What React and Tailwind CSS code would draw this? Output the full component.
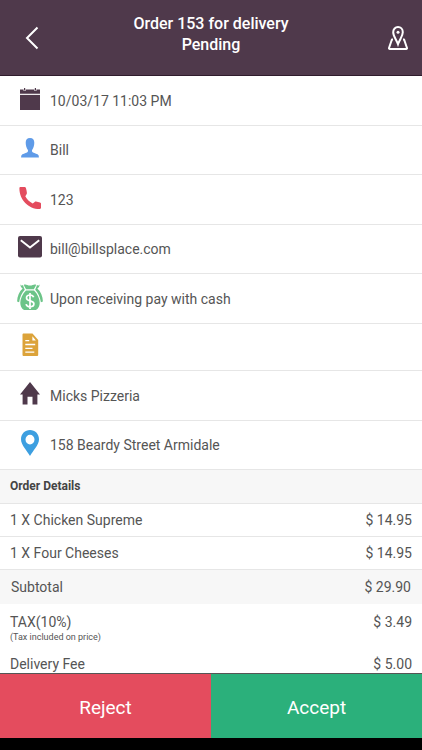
import React from 'react';

const CalendarIcon = () => (
  <svg width="22" height="24" viewBox="0 0 22 24" fill="#4f394b" aria-hidden="true">
    <path d="M1 2.500h3.600v1.600h2V2.500h8.800v1.600h2V2.500H21v4.200H1z" />
    <path d="M5 1h1.200v2.400H5zM15.800 1H17v2.400h-1.200z" />
    <path d="M1 7.900h20V23H1z" />
  </svg>
);

const PersonIcon = () => (
  <svg width="18" height="20" viewBox="0 0 18 20" fill="#5f9be8" aria-hidden="true">
    <path d="M9 0c3 0 4.300 2 4.300 4.700 0 2.800-.9 5.500-2.200 7.200-.3 1 0 2.100.9 2.600 1.500.9 4.800 1.300 5.500 2.700.3.700.4 1.800.4 2.300H.1c0-.5.1-1.600.4-2.300.7-1.400 4-1.800 5.500-2.700.9-.5 1.200-1.600.9-2.600C5.600 10.200 4.700 7.500 4.700 4.700 4.700 2 6 0 9 0z" />
  </svg>
);

const PhoneIcon = () => (
  <svg width="22" height="24" viewBox="0 0 22 24" fill="#e44c5e" aria-hidden="true">
    <path d="M1.500 1h4c.8 0 1.200.4 1.400 1.100.5 1.700.9 3.300 1 5 0 .6-.1 1-.5 1.500L6.300 10.300c1.700 3.300 4.100 5.500 7.400 7.200l2-1.600c.4-.4.9-.4 1.300-.3 1.500.5 2.600.7 4 .8.600.1 1 .5 1 1.200v4.200c0 .7-.5 1.200-1.100 1.200C9.600 23.200.4 14 .4 2.200.4 1.500.9 1 1.500 1z" />
  </svg>
);

const MailIcon = () => (
  <svg width="24" height="22" viewBox="0 0 24 22" aria-hidden="true">
    <rect width="24" height="21.500" rx="2" fill="#4f394b" />
    <path d="M2.800 4.200 12 11.600l9.200-7.400" fill="none" stroke="#fff" strokeWidth="1.900" />
  </svg>
);

const MoneyIcon = () => (
  <svg width="26" height="28" viewBox="0 0 26 28" fill="#6cc488" aria-hidden="true">
    <path d="M7.200 1.600c1.800-.8 3.300 1 5.800 1s4-1.800 5.800-1c.9.700-1.300 3.300-1.800 4.700H9C8.500 4.900 6.300 2.300 7.200 1.600z" />
    <path d="M9 7.400h8c3.600 3.600 5.700 8.200 5.700 12.300 0 4.500-2.700 7.300-4.500 7.300H7.800c-1.800 0-4.500-2.800-4.500-7.300C3.300 15.600 5.400 11 9 7.400z" />
    <path d="M3.500 1.200c.4 1.500 1.700 1.600 2.600.9.200 1.700 1 2.900 1.700 4.700C4.900 10 2.800 14.400 2.100 19.300L.1 18.500C.2 13.400 2.200 8.500 5.700 5.600 4.200 4.600 3.200 3.100 3.500 1.200z" />
    <path d="M22.500 1.200c-.4 1.500-1.700 1.600-2.600.9-.2 1.700-1 2.900-1.700 4.700 2.900 3.200 5 7.600 5.700 12.500l2-.8c-.1-5.100-2.100-10-5.600-12.900 1.500-1 2.500-2.500 2.200-4.400z" />
    <path
      d="M16.600 14.300c-.4-1.500-1.700-2.300-3.500-2.300-2.100 0-3.600 1.100-3.600 2.900 0 4 7.400 1.900 7.400 5.900 0 1.900-1.600 3-3.800 3-2.100 0-3.600-.9-4-2.700M13 9.900v16"
      fill="none"
      stroke="#fff"
      strokeWidth="1.700"
    />
  </svg>
);

const NoteIcon = () => (
  <svg width="17" height="24" viewBox="0 0 17 24" aria-hidden="true">
    <path d="M1.800.5h8.700L16.200 7v14.700c0 .8-.5 1.300-1.300 1.300H1.800C1 23 .5 22.500.5 21.700V1.800C.5 1 1 .5 1.800.5z" fill="#dca33a" />
    <path d="M10.400 3.300v4.200h3.500z" fill="#fff" />
    <path d="M3.300 7.700h3.900M3.300 11.500h9.900M3.300 15.300h7.200M3.300 19.100h9" stroke="#fff" strokeWidth="1.300" />
  </svg>
);

const HomeIcon = () => (
  <svg width="20" height="23" viewBox="0 0 20 23" fill="#4f394b" aria-hidden="true">
    <path d="M10 0l10 12.400h-2.600v10.100h-4.900v-7.700h-5v7.700H2.600V12.400H0z" />
  </svg>
);

const PinIcon = () => (
  <svg width="18" height="26" viewBox="0 0 18 26" fill="#3d9fe0" aria-hidden="true">
    <path
      fillRule="evenodd"
      d="M9 0c5 0 9 3.900 9 9.200C18 15 12 20.500 9 26 6 20.500 0 15 0 9.200 0 3.900 4 0 9 0zm0 4.700a4.500 4.900 0 1 0 0 9.800 4.500 4.900 0 0 0 0-9.800z"
    />
  </svg>
);

const details = [
  { id: 'date', Icon: CalendarIcon, text: '10/03/17 11:03 PM' },
  { id: 'name', Icon: PersonIcon, text: 'Bill' },
  { id: 'phone', Icon: PhoneIcon, text: '123' },
  { id: 'email', Icon: MailIcon, text: 'bill@billsplace.com' },
  { id: 'payment', Icon: MoneyIcon, text: 'Upon receiving pay with cash' },
  { id: 'notes', Icon: NoteIcon, text: '', short: true },
  { id: 'store', Icon: HomeIcon, text: 'Micks Pizzeria' },
  { id: 'address', Icon: PinIcon, text: '158 Beardy Street Armidale' },
];

const items = [
  { id: 1, qty: 1, name: 'Chicken Supreme', price: 14.95 },
  { id: 2, qty: 1, name: 'Four Cheeses', price: 14.95 },
];

const formatPrice = (price) => `$ ${price.toFixed(2)}`;

const Header = () => (
  <header className="flex h-[76px] shrink-0 items-center justify-between border-b border-[#2f1c2c] bg-[#4f394b] px-[14px] text-white">
    <button type="button" aria-label="Back" className="flex h-10 w-9 items-center justify-center">
      <svg width="14" height="24" viewBox="0 0 14 24" fill="none" stroke="#fff" strokeWidth="2">
        <path d="M12.500 1.500 2 12l10.500 10.500" />
      </svg>
    </button>
    <h1 className="pb-2 text-center text-base leading-[21px] font-medium">
      Order 153 for delivery
      <br />
      Pending
    </h1>
    <button type="button" aria-label="Show on map" className="flex h-10 w-9 items-center justify-end">
      <svg width="20" height="24" viewBox="0 0 20 24" fill="none" stroke="#fff" strokeWidth="2">
        <path d="M10 18.200C8.300 13.500 5.200 10 5.200 6.200 5.200 3.200 7.300 1 10 1s4.800 2.200 4.800 5.200c0 3.800-3.100 7.300-4.800 12z" />
        <circle cx="10" cy="6.200" r="1.500" fill="#fff" stroke="none" />
        <path d="M5 13.500H3.900L1 22c-.1.600.2 1 .8 1h16.400c.6 0 .9-.4.800-1l-2.900-8.500H15" strokeLinejoin="round" />
      </svg>
    </button>
  </header>
);

const App = () => {
  const subtotal = items.reduce((sum, item) => sum + item.price, 0);

  return (
    <div className="flex h-screen flex-col bg-white font-[Roboto,sans-serif] text-sm text-[#555]">
      <Header />

      <main className="min-h-0 flex-1 overflow-y-auto [scrollbar-width:none]">
        {/* Customer and delivery info */}
        <ul>
          {details.map(({ id, Icon, text, short }) => (
            <li
              key={id}
              className={`flex items-center border-b border-[#e6e6e6] pb-1 pl-4 ${short ? 'h-[47px]' : 'h-[50px] even:h-[49px]'}`}
            >
              <span className="flex w-7 justify-center">
                <Icon />
              </span>
              <span className="pt-1 pl-[6px]">{text}</span>
            </li>
          ))}
        </ul>

        {/* Order summary */}
        <table className="w-full border-collapse">
          <thead>
            <tr className="h-[33px] border-b border-[#e6e6e6] bg-[#f7f7f7]">
              <th colSpan={2} className="px-[10px] text-left text-xs font-bold text-[#444]">
                Order Details
              </th>
            </tr>
          </thead>
          <tbody>
            {items.map((item) => (
              <tr key={item.id} className="h-[33px] border-b border-[#e6e6e6]">
                <td className="pl-[10px]">{item.qty} X {item.name}</td>
                <td className="pr-[10px] text-right">{formatPrice(item.price)}</td>
              </tr>
            ))}
            <tr className="h-[35px] bg-[#f7f7f7]">
              <td className="pl-[11px]">Subtotal</td>
              <td className="pr-[11px] text-right">{formatPrice(subtotal)}</td>
            </tr>
            <tr className="h-12 align-top">
              <td className="pt-2 pl-[10px]">
                TAX(10%)
                <span className="block text-[9px] leading-[10px]">(Tax included on price)</span>
              </td>
              <td className="pt-2 pr-[10px] text-right">{formatPrice(3.49)}</td>
            </tr>
            <tr className="h-6">
              <td className="pl-[10px]">Delivery Fee</td>
              <td className="pr-[10px] text-right">{formatPrice(5)}</td>
            </tr>
          </tbody>
        </table>
      </main>

      <footer className="shrink-0 bg-black pb-3">
        <div className="grid h-[65px] grid-cols-2 border-t border-[#555] text-[19px] text-white">
          <button type="button" className="bg-[#e44c5e] pt-1">Reject</button>
          <button type="button" className="bg-[#2bb07b] pt-1">Accept</button>
        </div>
      </footer>
    </div>
  );
};

export default App;
